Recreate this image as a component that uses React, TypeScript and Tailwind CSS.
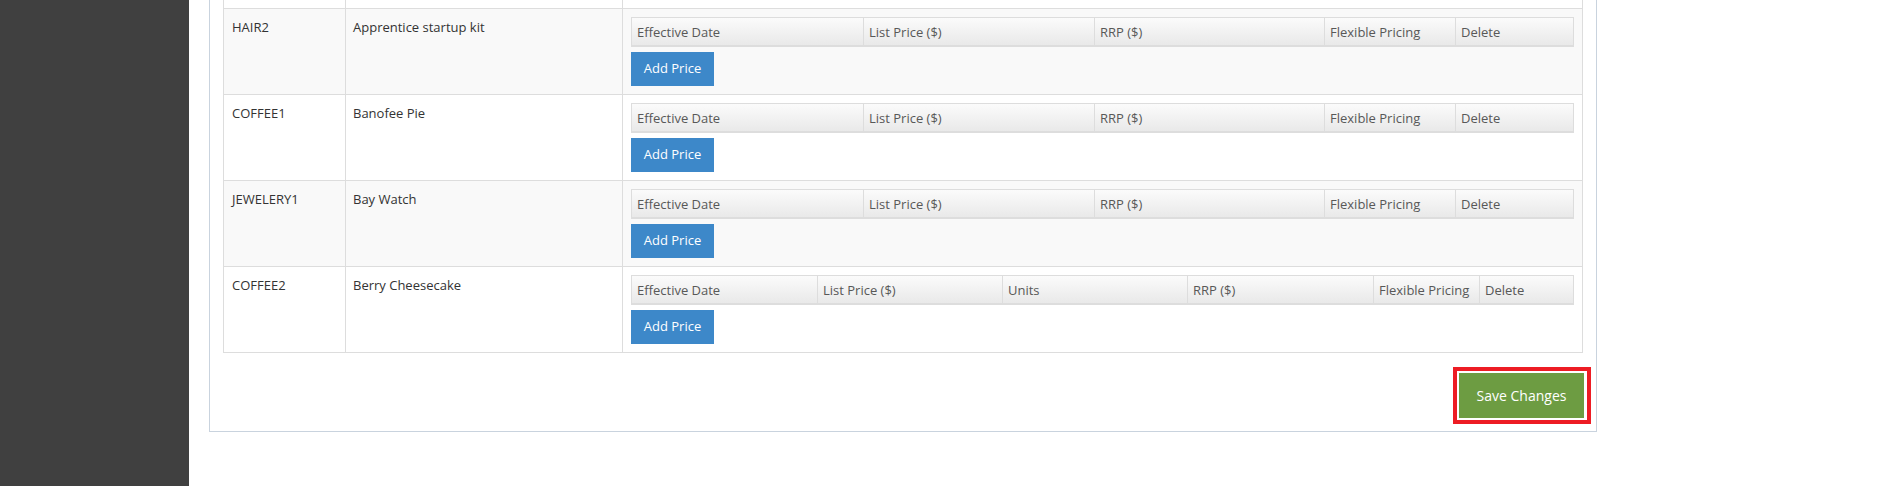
import React from "react";

type Product = {
  code: string;
  name: string;
  columns: string[];
  striped: boolean;
};

const fiveCols = ["Effective Date", "List Price ($)", "RRP ($)", "Flexible Pricing", "Delete"];
const sixCols = ["Effective Date", "List Price ($)", "Units", "RRP ($)", "Flexible Pricing", "Delete"];

const products: Product[] = [
  { code: "HAIR2", name: "Apprentice startup kit", columns: fiveCols, striped: true },
  { code: "COFFEE1", name: "Banofee Pie", columns: fiveCols, striped: false },
  { code: "JEWELERY1", name: "Bay Watch", columns: fiveCols, striped: true },
  { code: "COFFEE2", name: "Berry Cheesecake", columns: sixCols, striped: false },
];

const PriceTable = ({ columns }: { columns: string[] }) => {
  const grid =
    columns.length === 6
      ? "grid-cols-[185px_185px_185px_186px_106px_1fr]"
      : "grid-cols-[231px_231px_230px_131px_1fr]";
  return (
    <div className="flex flex-col">
      <div
        className={`grid ${grid} h-[30px] border border-b-2 border-[#dddddd] bg-gradient-to-b from-[#fbfbfb] to-[#e9e9e9]`}
      >
        {columns.map((col, i) => (
          <div
            key={col}
            className={`flex items-center whitespace-nowrap px-[5px] pt-[2px] text-[13px] text-[#585858] ${
              i > 0 ? "border-l border-[#dddddd]" : ""
            }`}
          >
            {col}
          </div>
        ))}
      </div>
      <div className="mt-[5px]">
        <button className="h-[34px] w-[83px] bg-[#3d88c9] text-[13px] text-white">Add Price</button>
      </div>
    </div>
  );
};

const ProductRow = ({ product }: { product: Product }) => (
  <div
    className={`grid grid-cols-[121px_277px_1fr] border-t border-[#dddddd] ${
      product.striped ? "bg-[#f9f9f9]" : "bg-white"
    }`}
  >
    <div className="px-[8px] pt-[8px] leading-[20px] text-[#333333]">{product.code}</div>
    <div className="border-l border-[#dddddd] px-[7px] pt-[8px] leading-[20px] text-[#333333]">
      {product.name}
    </div>
    <div className="border-l border-[#dddddd] px-[8px] py-[8px]">
      <PriceTable columns={product.columns} />
    </div>
  </div>
);

export default function App() {
  return (
    <div
      className="flex h-[486px] w-full overflow-hidden bg-white text-[13px]"
      style={{ fontFamily: '"Open Sans", "Liberation Sans", sans-serif' }}
    >
      <aside className="w-[189px] shrink-0 bg-[#404040]" />
      <main className="pl-[20px]">
        <div className="w-[1388px] border border-t-0 border-[#c9d3de] px-[13px] pb-[13px]">
          <div className="border-x border-b border-[#dddddd]">
            {/* tail of the row above, scrolled out of view */}
            <div className="grid h-[8px] grid-cols-[121px_277px_1fr] bg-white">
              <div />
              <div className="border-l border-[#dddddd]" />
              <div className="border-l border-[#dddddd]" />
            </div>
            {products.map((p) => (
              <ProductRow key={p.code} product={p} />
            ))}
          </div>
          <div className="mt-[20px] -mr-[1px] flex justify-end">
            <div className="relative">
              <button className="h-[45px] w-[125px] bg-[#6d9c42] text-[14px] text-white">Save Changes</button>
              <div className="pointer-events-none absolute -top-[6px] -bottom-[6px] -left-[6px] -right-[7px] border-4 border-[#ed1c24]" />
            </div>
          </div>
        </div>
      </main>
    </div>
  );
}
